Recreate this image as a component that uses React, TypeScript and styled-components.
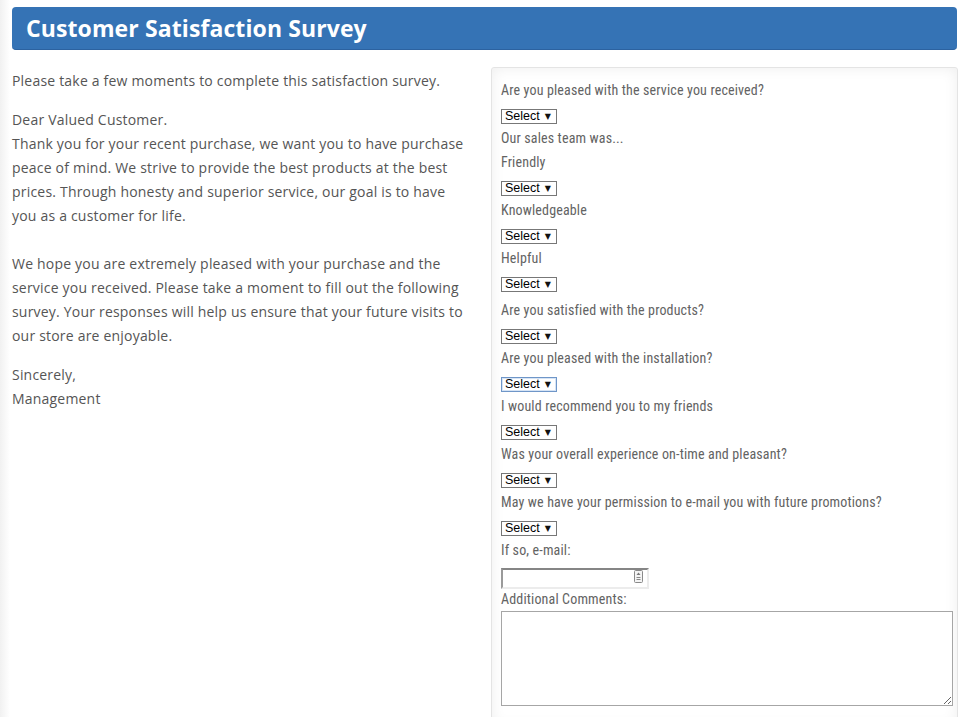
import React from "react";
import styled, { createGlobalStyle, css } from "styled-components";

const Global = createGlobalStyle`
  html, body { margin: 0; padding: 0; }
  body {
    background: linear-gradient(to right, #f1f1f1 0px, #ffffff 10px);
    font-family: "Open Sans", "Liberation Sans", sans-serif;
    overflow: hidden;
  }
`;

const Page = styled.div`
  padding: 7px 1px 0 12px;
  width: 946px;
`;

const Header = styled.h1`
  margin: 0 1px 0 0;
  height: 43px;
  box-sizing: border-box;
  padding: 0 14px;
  display: flex;
  align-items: center;
  background: #3573b5;
  border-bottom: 1px solid #2c62a0;
  border-radius: 4px;
  color: #ffffff;
  font-family: "Open Sans", "Liberation Sans", sans-serif;
  font-weight: 700;
  font-size: 23px;
  letter-spacing: 0.1px;
`;

const Columns = styled.div`
  display: grid;
  grid-template-columns: 457px 467px;
  column-gap: 22px;
  margin-top: 17px;
  align-items: start;
`;

const Intro = styled.div`
  color: #555555;
  font-size: 14px;
  letter-spacing: 0.2px;
  line-height: 24px;
  padding-top: 2px;
`;

const Para = styled.p`
  margin: 0 0 15px 0;
`;

const Panel = styled.form`
  box-sizing: border-box;
  min-height: 660px;
  border: 1px solid #e4e4e4;
  border-radius: 3px 3px 0 0;
  background: #ffffff;
  box-shadow: inset 0 0 14px rgba(0, 0, 0, 0.07);
  padding: 10px 4px 10px 9px;
  display: flex;
  flex-direction: column;
`;

const Label = styled.label<{ $gap?: boolean }>`
  display: block;
  font-family: "Roboto Condensed", "Liberation Sans Narrow", "DejaVu Sans Condensed", Roboto, sans-serif;
  font-stretch: condensed;
  font-size: 14px;
  letter-spacing: 0.15px;
  line-height: 24px;
  color: #636363;
  ${(p) => p.$gap && css`margin-top: 4px;`}
`;

const SelectRow = styled.div`
  display: flex;
  align-items: flex-start;
  height: 24px;
  padding-top: 7px;
  box-sizing: border-box;
`;

const SelectWrap = styled.span<{ $focused?: boolean }>`
  position: relative;
  display: block;
  width: 56px;
  height: 15px;
  box-sizing: border-box;
  border: 1px solid ${(p) => (p.$focused ? "#6f96c8" : "#777777")};
  background: #ffffff;
  ${(p) => p.$focused && css`box-shadow: inset 0 0 0 1px #d6e4f5;`}
  &::after {
    content: "▼";
    position: absolute;
    right: 5px;
    top: 1px;
    font-family: "DejaVu Sans", sans-serif;
    font-size: 8px;
    line-height: 11px;
    color: #111;
    pointer-events: none;
  }
`;

const NativeSelect = styled.select`
  appearance: none;
  -webkit-appearance: none;
  display: block;
  width: 100%;
  height: 13px;
  margin: 0;
  border: none;
  outline: none;
  background: transparent;
  padding: 0 0 0 3px;
  font-family: "Liberation Sans", Arial, sans-serif;
  font-size: 12.5px;
  line-height: 13px;
  color: #000;
`;

const InputRow = styled.div`
  position: relative;
  width: 148px;
  margin-top: 4px;
  height: 21px;
`;

const EmailInput = styled.input`
  box-sizing: border-box;
  width: 148px;
  height: 21px;
  margin: 0;
  padding: 0 18px 0 3px;
  border-top: 2px solid #858585;
  border-left: 2px solid #9a9a9a;
  border-right: 2px solid #ececec;
  border-bottom: 2px solid #ececec;
  background: #fff;
  outline: none;
  font-family: "Liberation Sans", Arial, sans-serif;
  font-size: 13px;
`;

const InputIcon = styled.svg`
  position: absolute;
  right: 6px;
  top: 4px;
  pointer-events: none;
`;

const Comments = styled.textarea`
  display: block;
  box-sizing: border-box;
  width: 452px;
  height: 95px;
  margin: 0;
  border: 1px solid #a6a6a6;
  border-radius: 0;
  outline: none;
  padding: 2px;
  font-family: "Liberation Sans", Arial, sans-serif;
  font-size: 13px;
`;

function Select({ focused }: { focused?: boolean }) {
  return (
    <SelectRow>
      <SelectWrap $focused={focused}>
        <NativeSelect defaultValue="">
          <option value="">Select</option>
          <option value="yes">Yes</option>
          <option value="no">No</option>
        </NativeSelect>
      </SelectWrap>
    </SelectRow>
  );
}

export default function App() {
  return (
    <>
      <Global />
      <Page>
        <Header>Customer Satisfaction Survey</Header>
        <Columns>
          <Intro>
            <Para>Please take a few moments to complete this satisfaction survey.</Para>
            <Para>
              Dear Valued Customer.
              <br />
              Thank you for your recent purchase, we want you to have purchase peace of mind. We strive to
              provide the best products at the best prices. Through honesty and superior service, our goal is
              to have you as a customer for life.
              <br />
              <br />
              We hope you are extremely pleased with your purchase and the service you received. Please take a
              moment to fill out the following survey. Your responses will help us ensure that your future
              visits to our store are enjoyable.
            </Para>
            <Para>
              Sincerely,
              <br />
              Management
            </Para>
          </Intro>
          <Panel>
            <Label>Are you pleased with the service you received?</Label>
            <Select />
            <Label>Our sales team was...</Label>
            <Label>Friendly</Label>
            <Select />
            <Label>Knowledgeable</Label>
            <Select />
            <Label>Helpful</Label>
            <Select />
            <Label $gap>Are you satisfied with the products?</Label>
            <Select />
            <Label>Are you pleased with the installation?</Label>
            <Select focused />
            <Label>I would recommend you to my friends</Label>
            <Select />
            <Label>Was your overall experience on-time and pleasant?</Label>
            <Select />
            <Label>May we have your permission to e-mail you with future promotions?</Label>
            <Select />
            <Label>If so, e-mail:</Label>
            <InputRow>
              <EmailInput type="text" />
              <InputIcon width="9" height="13" viewBox="0 0 9 13">
                <rect x="0.5" y="0.5" width="8" height="12" rx="1" fill="#f4f4f4" stroke="#8a8a8a" />
                <path d="M4.5 2.5 L6.5 5 L2.5 5 Z" fill="#777" />
                <rect x="2.5" y="7" width="4" height="1" fill="#888" />
                <rect x="2.5" y="9" width="4" height="1" fill="#888" />
              </InputIcon>
            </InputRow>
            <Label>Additional Comments:</Label>
            <Comments />
          </Panel>
        </Columns>
      </Page>
    </>
  );
}
